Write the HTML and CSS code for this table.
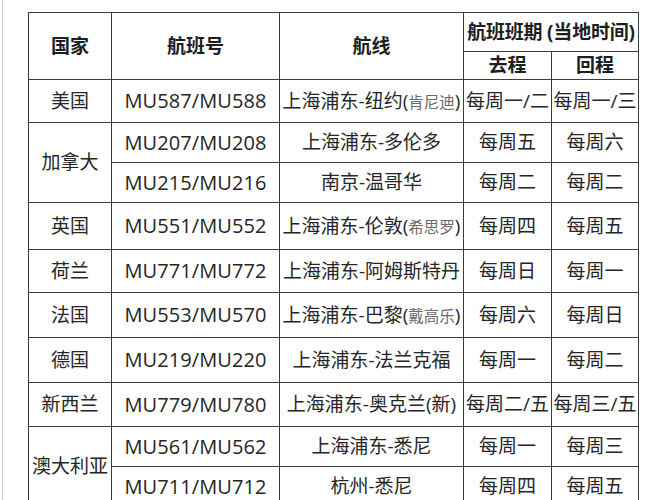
FILE: index.html
```html
<!DOCTYPE html>
<html lang="zh-CN">
<head>
<meta charset="utf-8">
<title>航班表</title>
<link rel="stylesheet" href="styles.css">
</head>
<body>
<div class="page">
  <table class="flights">
    <colgroup>
      <col class="c-country">
      <col class="c-flight">
      <col class="c-route">
      <col class="c-out">
      <col class="c-back">
    </colgroup>
    <thead>
      <tr class="h-top">
        <th rowspan="2">国家</th>
        <th rowspan="2">航班号</th>
        <th rowspan="2">航线</th>
        <th colspan="2" class="sched">航班班期 (当地时间)</th>
      </tr>
      <tr class="h-sub">
        <th>去程</th>
        <th>回程</th>
      </tr>
    </thead>
    <tbody>
      <tr class="r43">
        <td>美国</td><td class="fn">MU587/MU588</td><td>上海浦东-纽约(<span class="note">肯尼迪</span>)</td><td>每周一/二</td><td>每周一/三</td>
      </tr>
      <tr class="r40">
        <td rowspan="2">加拿大</td><td class="fn">MU207/MU208</td><td>上海浦东-多伦多</td><td>每周五</td><td>每周六</td>
      </tr>
      <tr class="r40">
        <td class="fn">MU215/MU216</td><td>南京-温哥华</td><td>每周二</td><td>每周二</td>
      </tr>
      <tr class="r47">
        <td>英国</td><td class="fn">MU551/MU552</td><td>上海浦东-伦敦(<span class="note">希思罗</span>)</td><td>每周四</td><td>每周五</td>
      </tr>
      <tr class="r43">
        <td>荷兰</td><td class="fn">MU771/MU772</td><td>上海浦东-阿姆斯特丹</td><td>每周日</td><td>每周一</td>
      </tr>
      <tr class="r45">
        <td>法国</td><td class="fn">MU553/MU570</td><td>上海浦东-巴黎(<span class="note">戴高乐</span>)</td><td>每周六</td><td>每周日</td>
      </tr>
      <tr class="r45">
        <td>德国</td><td class="fn">MU219/MU220</td><td>上海浦东-法兰克福</td><td>每周一</td><td>每周二</td>
      </tr>
      <tr class="r44">
        <td>新西兰</td><td class="fn">MU779/MU780</td><td>上海浦东-奥克兰(新)</td><td>每周二/五</td><td>每周三/五</td>
      </tr>
      <tr class="r40">
        <td rowspan="2">澳大利亚</td><td class="fn">MU561/MU562</td><td>上海浦东-悉尼</td><td>每周一</td><td>每周三</td>
      </tr>
      <tr class="r40">
        <td class="fn">MU711/MU712</td><td>杭州-悉尼</td><td>每周四</td><td>每周五</td>
      </tr>
    </tbody>
  </table>
</div>
</body>
</html>
```
FILE: styles.css
```css
html, body {
  margin: 0;
  padding: 0;
  background: #ffffff;
}
body {
  width: 660px;
  height: 500px;
  overflow: hidden;
}
.page {
  margin-left: 2px;
  border-left: 1px solid #d4d4d4;
  height: 500px;
  padding-top: 12px;
  padding-left: 25px;
  box-sizing: border-box;
}
.flights {
  border-collapse: collapse;
  table-layout: fixed;
  width: 610px;
  font-family: "Open Sans", "Noto Sans CJK SC", sans-serif;
  font-size: 19px;
  color: #252525;
}
.c-country { width: 83px; }
.c-flight { width: 168px; }
.c-route { width: 184px; }
.c-out { width: 88px; }
.c-back { width: 87px; }
.flights th,
.flights td {
  border: 1.5px solid #3c3c3c;
  padding: 0;
  text-align: center;
  vertical-align: middle;
  white-space: nowrap;
  line-height: 1.2;
}
.flights th {
  font-weight: 700;
  color: #1e1e1e;
}
.flights .fn {
  font-size: 20px;
  letter-spacing: 0.1px;
}
.h-top { height: 39px; }
.h-sub { height: 28px; }
.sched { letter-spacing: -0.2px; }
.r40 { height: 40px; }
.r43 { height: 43px; }
.r44 { height: 44px; }
.r45 { height: 45px; }
.r47 { height: 47px; }
.note {
  font-size: 15.5px;
  color: #6a6a6a;
}
```
